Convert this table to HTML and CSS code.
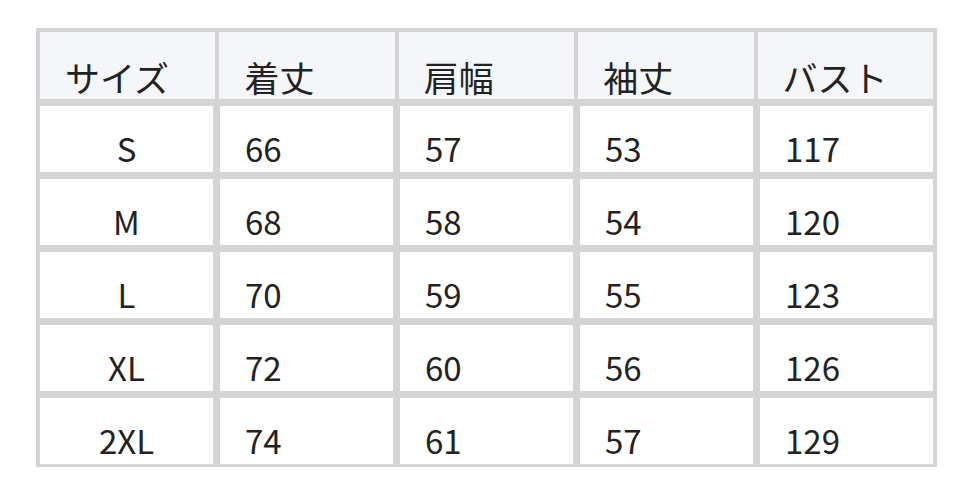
FILE: index.html
```html
<!DOCTYPE html>
<html lang="ja">
<head>
<meta charset="utf-8">
<link rel="stylesheet" href="styles.css">
</head>
<body>
<div class="sheet">
  <div class="size-table">
    <div class="row head">
      <div class="cell">サイズ</div>
      <div class="cell">着丈</div>
      <div class="cell">肩幅</div>
      <div class="cell">袖丈</div>
      <div class="cell">バスト</div>
    </div>
    <div class="body">
      <div class="row">
        <div class="cell size">S</div><div class="cell">66</div><div class="cell">57</div><div class="cell">53</div><div class="cell">117</div>
      </div>
      <div class="row">
        <div class="cell size">M</div><div class="cell">68</div><div class="cell">58</div><div class="cell">54</div><div class="cell">120</div>
      </div>
      <div class="row">
        <div class="cell size">L</div><div class="cell">70</div><div class="cell">59</div><div class="cell">55</div><div class="cell">123</div>
      </div>
      <div class="row">
        <div class="cell size">XL</div><div class="cell">72</div><div class="cell">60</div><div class="cell">56</div><div class="cell">126</div>
      </div>
      <div class="row">
        <div class="cell size">2XL</div><div class="cell">74</div><div class="cell">61</div><div class="cell">57</div><div class="cell">129</div>
      </div>
    </div>
  </div>
</div>
</body>
</html>
```
FILE: styles.css
```css
html, body {
  margin: 0;
  padding: 0;
  background: #ffffff;
}
body {
  font-family: "Noto Sans CJK JP", "Noto Sans", sans-serif;
  color: #222222;
}
.sheet {
  width: 972px;
  height: 495px;
  padding: 28px 35px 0 36px;
  box-sizing: border-box;
}
.size-table {
  background: #d4d4d4;
  padding: 4px 4px 3px 4px;
  display: flex;
  flex-direction: column;
  gap: 7px;
}
.body {
  display: flex;
  flex-direction: column;
  gap: 7px;
}
.row {
  display: grid;
  grid-template-columns: repeat(5, 1fr);
  gap: 7px;
  height: 66px;
}
.row.head {
  gap: 4px;
  height: 67px;
}
.cell {
  background: #ffffff;
  display: flex;
  align-items: flex-end;
  padding-left: 25px;
  font-size: 33px;
  line-height: 48px;
}
.head .cell {
  background: #f5f6fa;
  padding-left: 25px;
  font-size: 35px;
  line-height: 44px;
}
.cell.size {
  justify-content: center;
  padding-left: 0;
}
```
